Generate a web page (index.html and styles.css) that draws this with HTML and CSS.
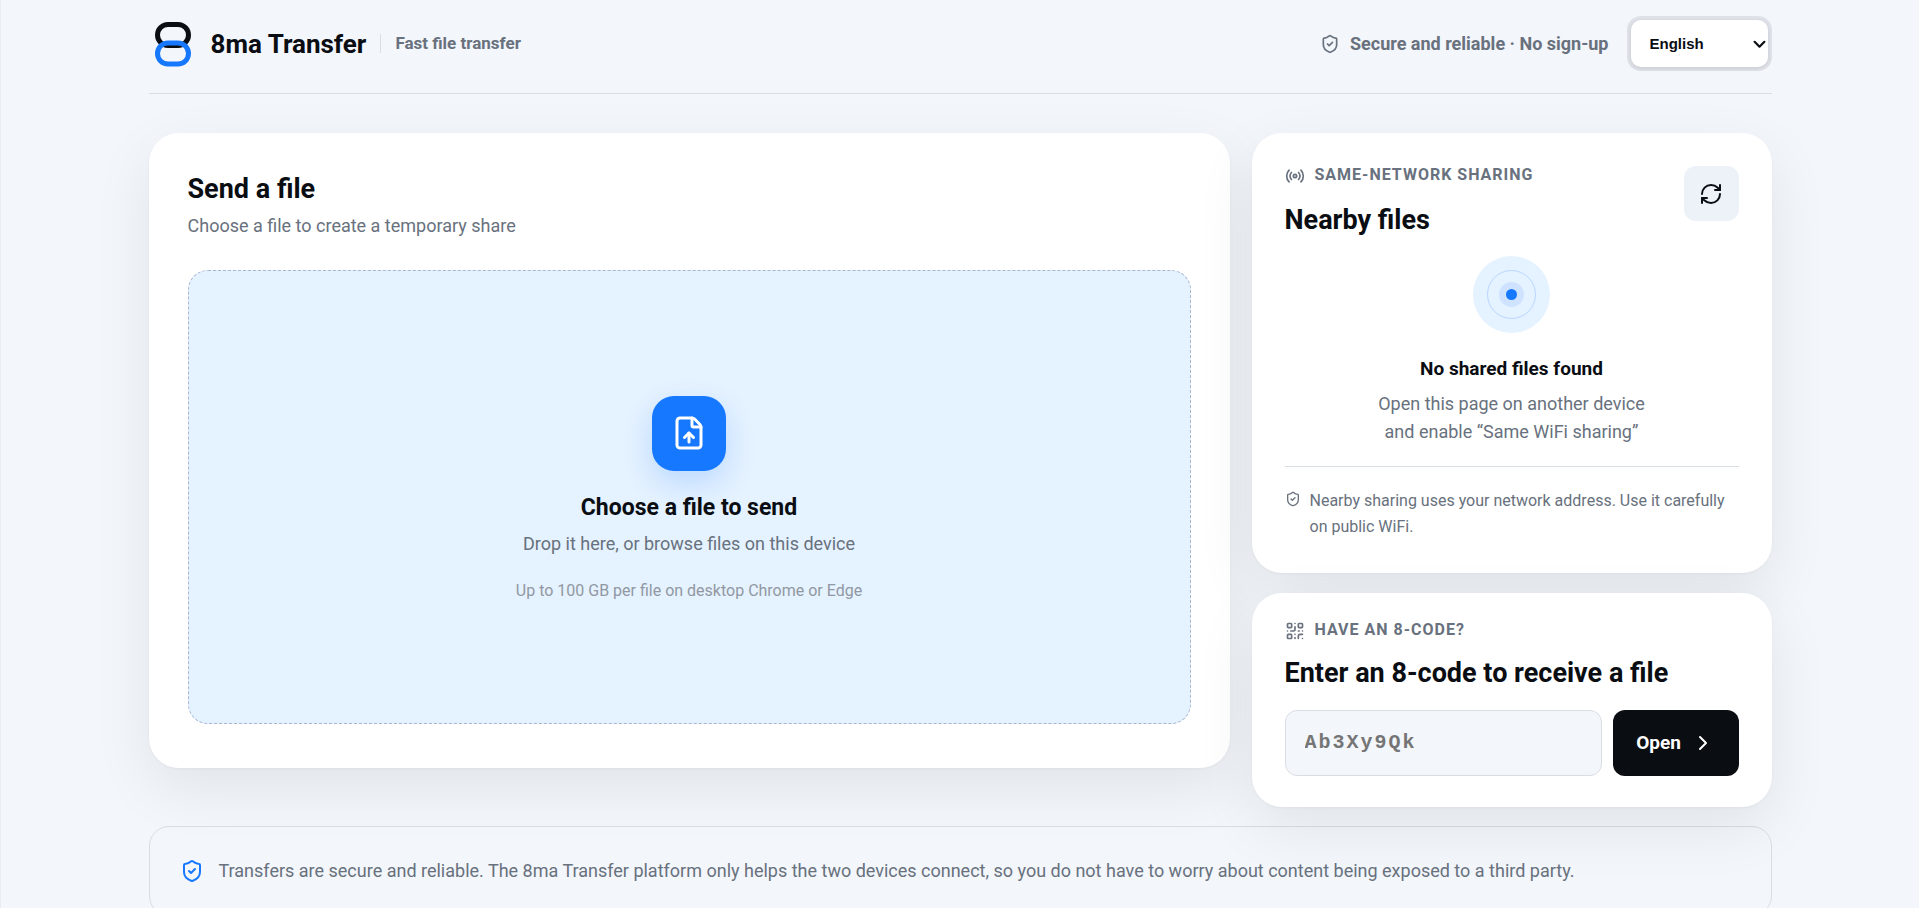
FILE: index.html
```html
<!DOCTYPE html>
<html lang="en">
<head>
<meta charset="utf-8">
<title>8ma Transfer</title>
<link rel="stylesheet" href="styles.css">
</head>
<body>
<svg class="sprite" aria-hidden="true">
  <symbol id="shield" viewBox="0 0 24 24"><path d="M20 13c0 5-3.500 7.500-7.660 8.950a1 1 0 0 1-.67-.01C7.500 20.500 4 18 4 13V6a1 1 0 0 1 1-1c2 0 4.500-1.200 6.240-2.720a1.170 1.170 0 0 1 1.520 0C14.510 3.810 17 5 19 5a1 1 0 0 1 1 1z"/><path d="m9 12 2 2 4-4"/></symbol>
</svg>
<div class="page">
  <header class="header">
    <a class="brand" href="#">
      <svg class="logo" viewBox="0 0 48 48" aria-hidden="true"><rect class="logo-top" x="8.500" y="4.500" width="31" height="21" rx="10.500"/><rect class="logo-bottom" x="8.500" y="23" width="31" height="21" rx="10.500"/></svg>
      <span class="brand-name">8ma Transfer</span>
      <span class="tagline">Fast file transfer</span>
    </a>
    <div class="header-side">
      <span class="trust"><svg class="icon icon-md"><use href="#shield"/></svg>Secure and reliable · No sign-up</span>
      <span class="language">
        <select class="language-select" aria-label="Language"><option>English</option></select>
        <svg class="icon language-arrow" viewBox="0 0 12 12" aria-hidden="true"><path d="m1.500 3.500 4.500 4.500 4.500-4.500"/></svg>
      </span>
    </div>
  </header>
  <main class="layout">
    <section class="card send">
      <h1 class="title">Send a file</h1>
      <p class="subtitle">Choose a file to create a temporary share</p>
      <button class="dropzone" type="button">
        <span class="upload"><svg class="icon icon-xl" viewBox="0 0 24 24"><path d="M6 22a2 2 0 0 1-2-2V4a2 2 0 0 1 2-2h8a2.400 2.400 0 0 1 1.704.706l3.588 3.588A2.400 2.400 0 0 1 20 8v12a2 2 0 0 1-2 2z"/><path d="M14 2v5a1 1 0 0 0 1 1h5"/><path d="M12 12v6"/><path d="m15 15-3-3-3 3"/></svg></span>
        <span class="drop-title">Choose a file to send</span>
        <span class="drop-text">Drop it here, or browse files on this device</span>
        <span class="drop-limit">Up to 100 GB per file on desktop Chrome or Edge</span>
      </button>
    </section>
    <div class="side">
      <section class="card nearby">
        <div class="nearby-head">
          <div>
            <p class="eyebrow"><svg class="icon icon-md" viewBox="0 0 24 24"><path d="M16.247 7.761a6 6 0 0 1 0 8.478"/><path d="M19.075 4.933a10 10 0 0 1 0 14.134"/><path d="M4.925 19.067a10 10 0 0 1 0-14.134"/><path d="M7.753 16.239a6 6 0 0 1 0-8.478"/><circle cx="12" cy="12" r="2"/></svg><span>Same-network sharing</span></p>
            <h2 class="title">Nearby files</h2>
          </div>
          <button class="refresh" type="button" aria-label="Refresh"><svg class="icon icon-lg" viewBox="0 0 24 24"><path d="M3 12a9 9 0 0 1 9-9 9.750 9.750 0 0 1 6.740 2.740L21 8"/><path d="M21 3v5h-5"/><path d="M21 12a9 9 0 0 1-9 9 9.750 9.750 0 0 1-6.740-2.740L3 16"/><path d="M8 16H3v5"/></svg></button>
        </div>
        <div class="empty">
          <span class="radar"><span class="radar-ring"><span class="radar-dot"></span></span></span>
          <h3 class="empty-title">No shared files found</h3>
          <p class="empty-text">Open this page on another device<br>and enable “Same WiFi sharing”</p>
        </div>
        <p class="note"><svg class="icon icon-sm"><use href="#shield"/></svg><span>Nearby sharing uses your network address. Use it carefully on public WiFi.</span></p>
      </section>
      <section class="card receive">
        <p class="eyebrow"><svg class="icon icon-md" viewBox="0 0 24 24"><rect width="5" height="5" x="3" y="3" rx="1"/><rect width="5" height="5" x="16" y="3" rx="1"/><rect width="5" height="5" x="3" y="16" rx="1"/><path d="M21 16h-3a2 2 0 0 0-2 2v3"/><path d="M21 21v.01"/><path d="M12 7v3a2 2 0 0 1-2 2H7"/><path d="M3 12h.01"/><path d="M12 3h.01"/><path d="M12 16v.01"/><path d="M16 12h1"/><path d="M21 12v.01"/><path d="M12 21v-1"/></svg><span>Have an 8-code?</span></p>
        <h2 class="title"><label for="code">Enter an 8-code to receive a file</label></h2>
        <form class="code-form">
          <input class="code-input" id="code" type="text" placeholder="Ab3Xy9Qk">
          <button class="open" type="button">Open<svg class="icon icon-lg" viewBox="0 0 24 24"><path d="m9 18 6-6-6-6"/></svg></button>
        </form>
      </section>
    </div>
  </main>
  <footer class="assurance"><svg class="icon icon-lg"><use href="#shield"/></svg><p>Transfers are secure and reliable. The 8ma Transfer platform only helps the two devices connect, so you do not have to worry about content being exposed to a third party.</p></footer>
</div>
</body>
</html>
```
FILE: styles.css
```css
:root {
  --ink: #0a0d12;
  --muted: #68717d;
  --blue: #1677ff;
  --line: #d9dee5;
  --ground: #f3f6fb;
  --pale: #e5f2ff;
}

* { box-sizing: border-box; }

body {
  margin: 0;
  border-left: 1px solid #e9edf2;
  background: var(--ground);
  color: var(--ink);
  font-family: Roboto, "Liberation Sans", sans-serif;
  font-size: 18px;
  line-height: 28px;
}

h1, h2, h3, p { margin: 0; }

button, input, select { font: inherit; color: inherit; }
button { cursor: pointer; }

.sprite { position: absolute; width: 0; height: 0; }

.icon {
  flex: none;
  fill: none;
  stroke: currentColor;
  stroke-width: 2;
  stroke-linecap: round;
  stroke-linejoin: round;
}
.icon-sm { width: 16px; height: 16px; }
.icon-md { width: 20px; height: 20px; }
.icon-lg { width: 24px; height: 24px; }
.icon-xl { width: 36px; height: 36px; }

.page {
  max-width: 1687px;
  margin: 0 auto;
  padding: 0 32px 32px;
}

.header {
  display: flex;
  justify-content: space-between;
  align-items: center;
  padding: 16px 0 22px;
  border-bottom: 1px solid var(--line);
}
.brand {
  display: flex;
  align-items: center;
  color: inherit;
  text-decoration: none;
}
.logo { width: 48px; height: 48px; margin-right: 14px; fill: none; stroke-width: 5; }
.logo-top { stroke: var(--ink); }
.logo-bottom { stroke: var(--blue); }
.brand-name { font-size: 26px; font-weight: 700; }
.tagline {
  margin-left: 14px;
  padding-left: 14px;
  border-left: 1px solid var(--line);
  color: var(--muted);
  font-size: 17px;
  font-weight: 700;
  line-height: 19px;
}
.header-side { display: flex; align-items: center; gap: 18px; }
.trust {
  display: flex;
  align-items: center;
  gap: 10px;
  color: var(--muted);
  font-weight: 700;
}
.language {
  position: relative;
  display: flex;
  padding: 4px;
  border-radius: 14px;
  background: #dfe3e9;
}
.language-select {
  width: 137px;
  height: 47px;
  padding: 0 19px;
  border: 0;
  border-radius: 10px;
  background: #fff;
  box-shadow: 0 1px 4px rgb(10 13 18 / 12%);
  appearance: none;
  font: 700 15px/20px "Liberation Sans", sans-serif;
}
.language-arrow {
  position: absolute;
  top: 22px;
  right: 6px;
  width: 13px;
  height: 13px;
  pointer-events: none;
}

.layout {
  display: grid;
  grid-template-columns: minmax(0, 1fr) 520px;
  gap: 22px;
  align-items: start;
  margin-top: 39px;
}
.card {
  border-radius: 30px;
  background: #fff;
  box-shadow: 0 20px 60px rgb(10 13 18 / 8%), 0 1px 3px rgb(10 13 18 / 4%);
}
.side { display: grid; gap: 20px; }
.title { font-size: 27px; font-weight: 700; line-height: 36px; }

.send { padding: 38px 39px 44px; }
.subtitle { margin-top: 5px; color: var(--muted); }
.dropzone {
  display: flex;
  flex-direction: column;
  align-items: center;
  justify-content: center;
  width: 100%;
  min-height: 454px;
  margin-top: 30px;
  padding: 30px 24px 24px;
  border: 1px dashed #a9b6cf;
  border-radius: 20px;
  background: var(--pale);
}
.upload {
  display: grid;
  place-items: center;
  width: 74px;
  height: 75px;
  border-radius: 22px;
  background: var(--blue);
  color: #fff;
  box-shadow: 0 12px 30px rgb(22 119 255 / 20%);
}
.drop-title { margin-top: 23px; font-size: 23px; font-weight: 700; }
.drop-text { margin-top: 8px; color: var(--muted); }
.drop-limit { margin-top: 19px; color: #9198a3; font-size: 16px; }

.nearby { padding: 33px; }
.nearby-head { display: flex; justify-content: space-between; align-items: start; }
.eyebrow {
  display: flex;
  align-items: start;
  gap: 10px;
  color: var(--muted);
  font-size: 16px;
  font-weight: 700;
  line-height: 18px;
  letter-spacing: 1px;
  text-transform: uppercase;
}
.eyebrow + .title { margin-top: 16px; }
.refresh {
  display: grid;
  place-items: center;
  width: 55px;
  height: 55px;
  padding: 0;
  border: 0;
  border-radius: 12px;
  background: #edf1f8;
}
.empty { display: flex; flex-direction: column; align-items: center; margin-top: 18px; text-align: center; }
.radar, .radar-ring { display: grid; place-items: center; border-radius: 50%; }
.radar { width: 77px; height: 77px; background: var(--pale); }
.radar-ring { width: 49px; height: 49px; border: 1px solid #b9d6ff; }
.radar-dot {
  width: 11px;
  height: 11px;
  border-radius: 50%;
  background: var(--blue);
  box-shadow: 0 0 0 7px #cfe2ff;
}
.empty-title { margin-top: 22px; font-size: 19px; font-weight: 700; line-height: 28px; }
.empty-text { margin-top: 7px; color: var(--muted); }
.note {
  display: flex;
  gap: 9px;
  margin-top: 20px;
  padding-top: 21px;
  border-top: 1px solid var(--line);
  color: var(--muted);
  font-size: 16px;
  line-height: 26px;
}
.note .icon { margin-top: 3px; }

.receive { padding: 28px 33px 31px; }
.receive .eyebrow + .title { margin-top: 14px; }
.code-form { display: flex; gap: 11px; margin-top: 19px; }
.code-input {
  flex: 1;
  min-width: 0;
  height: 66px;
  padding: 0 19px 2px;
  border: 1px solid var(--line);
  border-radius: 12px;
  background: var(--ground);
  font: 700 20px/24px "Liberation Mono", monospace;
  letter-spacing: 2px;
}
.code-input::placeholder { color: #757575; }
.open {
  display: flex;
  align-items: center;
  justify-content: center;
  gap: 10px;
  width: 126px;
  border: 0;
  border-radius: 12px;
  background: var(--ink);
  color: #fff;
  font-size: 19px;
  font-weight: 700;
}

.assurance {
  display: flex;
  align-items: center;
  gap: 15px;
  margin-top: 19px;
  padding: 30px;
  border: 1px solid var(--line);
  border-radius: 20px;
  color: var(--muted);
}
.assurance .icon { color: var(--blue); }
```
